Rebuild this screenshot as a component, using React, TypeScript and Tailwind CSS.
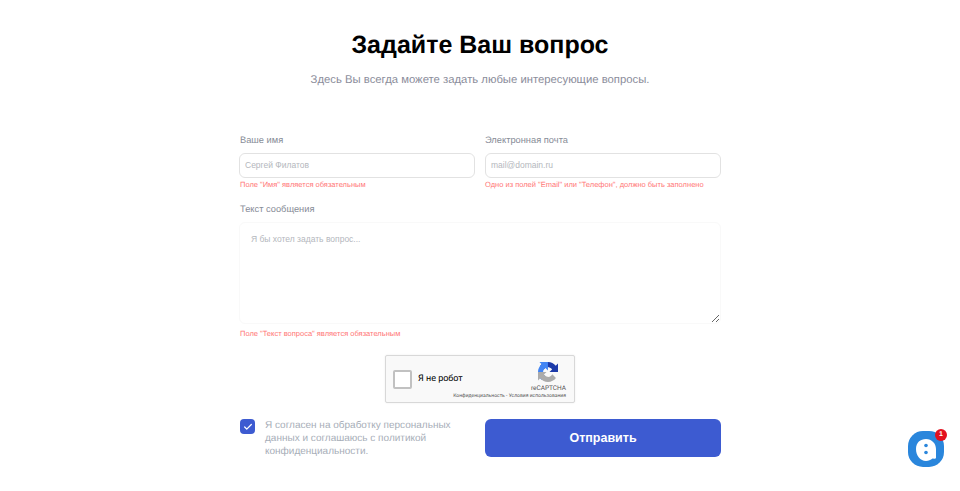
import { Check } from "lucide-react";

const sans = "font-['Liberation_Sans',Arial,sans-serif]";

function RecaptchaLogo() {
  return (
    <svg width="20" height="20" viewBox="0 0 64 64" className="block">
      <path
        d="M64 31.955l-.033-1.37V4.687l-7.16 7.16C50.948 4.674 42.033.093 32.05.093c-10.4 0-19.622 4.96-25.458 12.64l11.736 11.86a15.55 15.55 0 0 1 4.754-5.334c2.05-1.6 4.952-2.906 8.968-2.906.485 0 .86.057 1.135.163 4.976.393 9.288 3.14 11.828 7.124l-8.307 8.307 32.3.01"
        fill="#1c3aa9"
      />
      <path
        d="M31.862.094l-1.37.033H4.594l7.16 7.16C4.58 13.147 0 22.06 0 32.046c0 10.4 4.96 19.622 12.64 25.458l11.86-11.736a15.55 15.55 0 0 1-5.334-4.754c-1.6-2.05-2.906-4.952-2.906-8.968 0-.485.057-.86.163-1.135.393-4.976 3.14-9.288 7.124-11.828l8.307 8.307.01-32.3"
        fill="#4285f4"
      />
      <path
        d="M.001 32.045l.033 1.37v25.898l7.16-7.16c5.86 7.173 14.774 11.754 24.76 11.754 10.4 0 19.622-4.96 25.458-12.64l-11.736-11.86a15.55 15.55 0 0 1-4.754 5.334c-2.05 1.6-4.952 2.906-8.968 2.906-.485 0-.86-.057-1.135-.163-4.976-.393-9.288-3.14-11.828-7.124l8.307-8.307-32.3-.01"
        fill="#ababab"
      />
    </svg>
  );
}

function ChatWidget() {
  return (
    <div className="fixed right-[16px] bottom-[24px] w-[36px] h-[36px]">
      <svg width="36" height="36" viewBox="0 0 36 36" className="block">
        <rect width="36" height="36" rx="15" fill="#2a86dc" />
        <path d="M18 8c5.600 0 10 4.400 10 10v8.500c0 .8-.5 1.200-1.200 1.200l-2.300-.1c-1.900 1.500-4 2.400-6.500 2.400-5.600 0-10-5.400-10-12S12.400 8 18 8z" fill="#fff" />
        <circle cx="18" cy="14.500" r="1.800" fill="#2a86dc" />
        <circle cx="18" cy="21.500" r="1.800" fill="#2a86dc" />
      </svg>
      <span className="absolute -top-[2px] -right-[3px] w-[12px] h-[12px] rounded-full bg-[#e3101e] text-white text-[7px] leading-[12px] font-bold text-center">
        1
      </span>
    </div>
  );
}

export default function App() {
  return (
    <div className={`${sans} [text-rendering:geometricPrecision] min-h-[491px] bg-white flex flex-col items-center pt-[30px]`}>
      <h1 className="text-[25px] leading-[30px] font-bold text-black">Задайте Ваш вопрос</h1>
      <p className="mt-[12px] text-[11.300px] leading-[16px] text-[#8b8d9b]">
        Здесь Вы всегда можете задать любые интересующие вопросы.
      </p>

      <form className="w-[482px] mt-[45px]">
        <div className="grid grid-cols-2 gap-x-[10px]">
          <div>
            <label className="block pl-px text-[9.300px] leading-[14px] text-[#878c97]">Ваше имя</label>
            <input
              placeholder="Сергей Филатов"
              className="mt-[6px] block w-full h-[25px] px-[5px] pb-[2px] border border-[#e2e2e2] rounded-[6px] text-[8.500px] outline-none placeholder:text-[#b4b7bd]"
            />
            <p className="mt-[1px] pl-px text-[7.500px] leading-[11px] text-[#ff7777]">Поле "Имя" является обязательным</p>
          </div>
          <div>
            <label className="block text-[9.300px] leading-[14px] text-[#878c97]">Электронная почта</label>
            <input
              placeholder="mail@domain.ru"
              className="mt-[6px] block w-full h-[25px] px-[5px] pb-[2px] border border-[#e2e2e2] rounded-[6px] text-[8.500px] outline-none placeholder:text-[#b4b7bd]"
            />
            <p className="mt-[1px] text-[7.500px] leading-[11px] text-[#ff7777]">
              Одно из полей "Email" или "Телефон", должно быть заполнено
            </p>
          </div>
        </div>

        <label className="block mt-[12px] pl-px text-[9.300px] leading-[14px] text-[#878c97]">Текст сообщения</label>
        <textarea
          placeholder="Я бы хотел задать вопрос..."
          className="mt-[6px] block w-full h-[102px] px-[11px] py-[10px] border border-[#f9f9f9] rounded-[6px] text-[8.500px] outline-none placeholder:text-[#b4b7bd]"
        />
        <p className="mt-[4px] pl-px text-[7.500px] leading-[11px] text-[#ff7777]">Поле "Текст вопроса" является обязательным</p>

        <div className="flex justify-center mt-[16px]">
          <div className="w-[190px] h-[48px] bg-[#f9f9f9] border border-[#d8d8d8] rounded-[2px] shadow-[0_0_2px_rgba(0,0,0,0.08)] flex relative">
            <div className="flex items-center pl-[7px]">
              <span className="block w-[19px] h-[19px] bg-white border-2 border-[#c1c1c1] rounded-[2px]" />
              <span className="ml-[6px] mt-[2px] text-[9px] text-black font-['Roboto',sans-serif]">Я не робот</span>
            </div>
            <div className="absolute right-[8px] top-[6px] flex flex-col items-center">
              <RecaptchaLogo />
              <span className="text-[6.500px] leading-[9px] mt-[2px] text-[#555] font-['Roboto',sans-serif]">reCAPTCHA</span>
            </div>
            <span className="absolute right-[8px] bottom-[2px] text-[5px] leading-[7px] text-[#555] font-['Roboto',sans-serif]">
              Конфиденциальность - Условия использования
            </span>
          </div>
        </div>

        <div className="grid grid-cols-2 gap-x-[10px] mt-[16px]">
          <div className="flex items-start pl-px">
            <span className="w-[15px] h-[15px] shrink-0 rounded-[4px] bg-[#3d5bd1] flex items-center justify-center">
              <Check size={10} strokeWidth={3} className="text-white" />
            </span>
            <span className="ml-[10px] text-[10px] leading-[13px] text-[#a7aeb8]">
              Я согласен на обработку персональных данных и соглашаюсь с политикой конфиденциальности.
            </span>
          </div>
          <button
            type="button"
            className="h-[38px] rounded-[6px] bg-[#3d5bd1] text-white text-[12.500px] font-bold"
          >
            Отправить
          </button>
        </div>
      </form>

      <ChatWidget />
    </div>
  );
}
